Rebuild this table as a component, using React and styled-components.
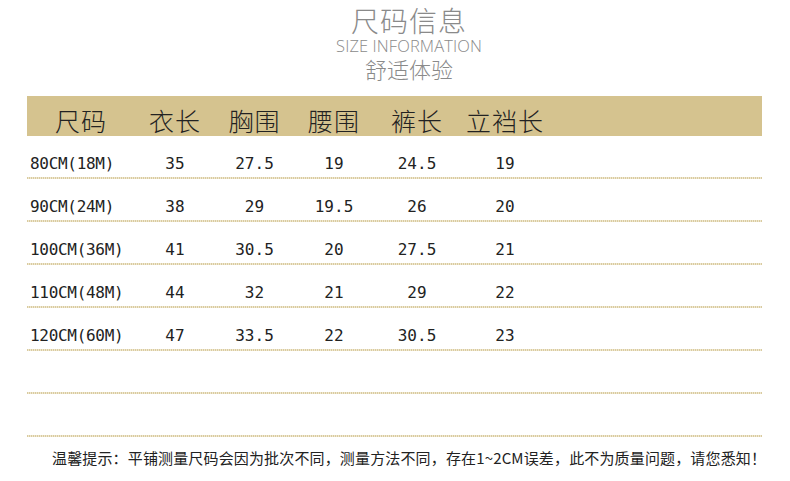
import React from "react"
import styled, { createGlobalStyle } from "styled-components"

const GlobalStyle = createGlobalStyle`
  html, body {
    margin: 0;
    padding: 0;
    background: #fff;
  }
  body {
    font-family: "Noto Sans CJK SC", "Noto Sans", sans-serif;
  }
`

const COLS = "108px 80px 79px 80px 86px 90px 1fr"

const rows = [
  ["80CM(18M)", "35", "27.5", "19", "24.5", "19"],
  ["90CM(24M)", "38", "29", "19.5", "26", "20"],
  ["100CM(36M)", "41", "30.5", "20", "27.5", "21"],
  ["110CM(48M)", "44", "32", "21", "29", "22"],
  ["120CM(60M)", "47", "33.5", "22", "30.5", "23"],
  ["", "", "", "", "", ""],
  ["", "", "", "", "", ""],
]

const headers = ["尺码", "衣长", "胸围", "腰围", "裤长", "立裆长"]

const SizeChart = () => {
  return (
    <Page>
      <GlobalStyle />
      <Title>
        <h1>尺码信息</h1>
        <h2>SIZE INFORMATION</h2>
        <h3>舒适体验</h3>
      </Title>
      <Table>
        <HeadRow>
          {headers.map((h) => (
            <HeadCell key={h}>{h}</HeadCell>
          ))}
          <span />
        </HeadRow>
        {rows.map((r, i) => (
          <Row key={i}>
            {r.map((v, j) => (
              <Cell key={j} $first={j === 0}>
                {v}
              </Cell>
            ))}
            <span />
          </Row>
        ))}
      </Table>
      <Note>
        温馨提示：平铺测量尺码会因为批次不同，测量方法不同，存在1~2CM误差，此不为质量问题，请您悉知！
      </Note>
    </Page>
  )
}

const Page = styled.div`
  width: 790px;
  height: 481px;
  overflow: hidden;
  padding-top: 3px;
  box-sizing: border-box;
`

const Title = styled.div`
  display: flex;
  flex-direction: column;
  align-items: center;
  color: #8a8a8a;
  padding-left: 28px;
  h1 {
    margin: 0;
    font-size: 28px;
    font-weight: 300;
    line-height: 34px;
    letter-spacing: 1px;
  }
  h2 {
    margin: 0;
    font-family: "Open Sans", "Liberation Sans", sans-serif;
    font-size: 16.5px;
    font-weight: 300;
    line-height: 18px;
    letter-spacing: 0.1px;
  }
  h3 {
    margin: 0;
    font-size: 22px;
    font-weight: 300;
    line-height: 26px;
  }
`

const Table = styled.div`
  margin: 15px 28px 0 27px;
`

const HeadRow = styled.div`
  display: grid;
  grid-template-columns: ${COLS};
  height: 40px;
  background: #d5c38f;
  align-items: center;
`

const HeadCell = styled.div`
  text-align: center;
  font-size: 25px;
  font-weight: 300;
  color: #222;
  line-height: 40px;
  padding-top: 4px;
  letter-spacing: 1px;
`

const Row = styled.div`
  display: grid;
  grid-template-columns: ${COLS};
  height: 43px;
  align-items: center;
  background: repeating-linear-gradient(
      90deg,
      #d9cba0 0 1px,
      #efe7cf 1px 2px
    )
    bottom / 100% 2px no-repeat;
`

const Cell = styled.div`
  font-family: "DejaVu Sans Mono", "Liberation Mono", monospace;
  font-size: 16px;
  color: #222;
  white-space: pre;
  padding-top: 11px;
  text-align: ${(p) => (p.$first ? "left" : "center")};
  padding-left: ${(p) => (p.$first ? "3px" : "0")};
  letter-spacing: ${(p) => (p.$first ? "-0.3px" : "0")};
`

const Note = styled.div`
  margin: 10px 0 0 52px;
  font-size: 15px;
  color: #222;
  letter-spacing: 0.15px;
  white-space: nowrap;
`

export default SizeChart
